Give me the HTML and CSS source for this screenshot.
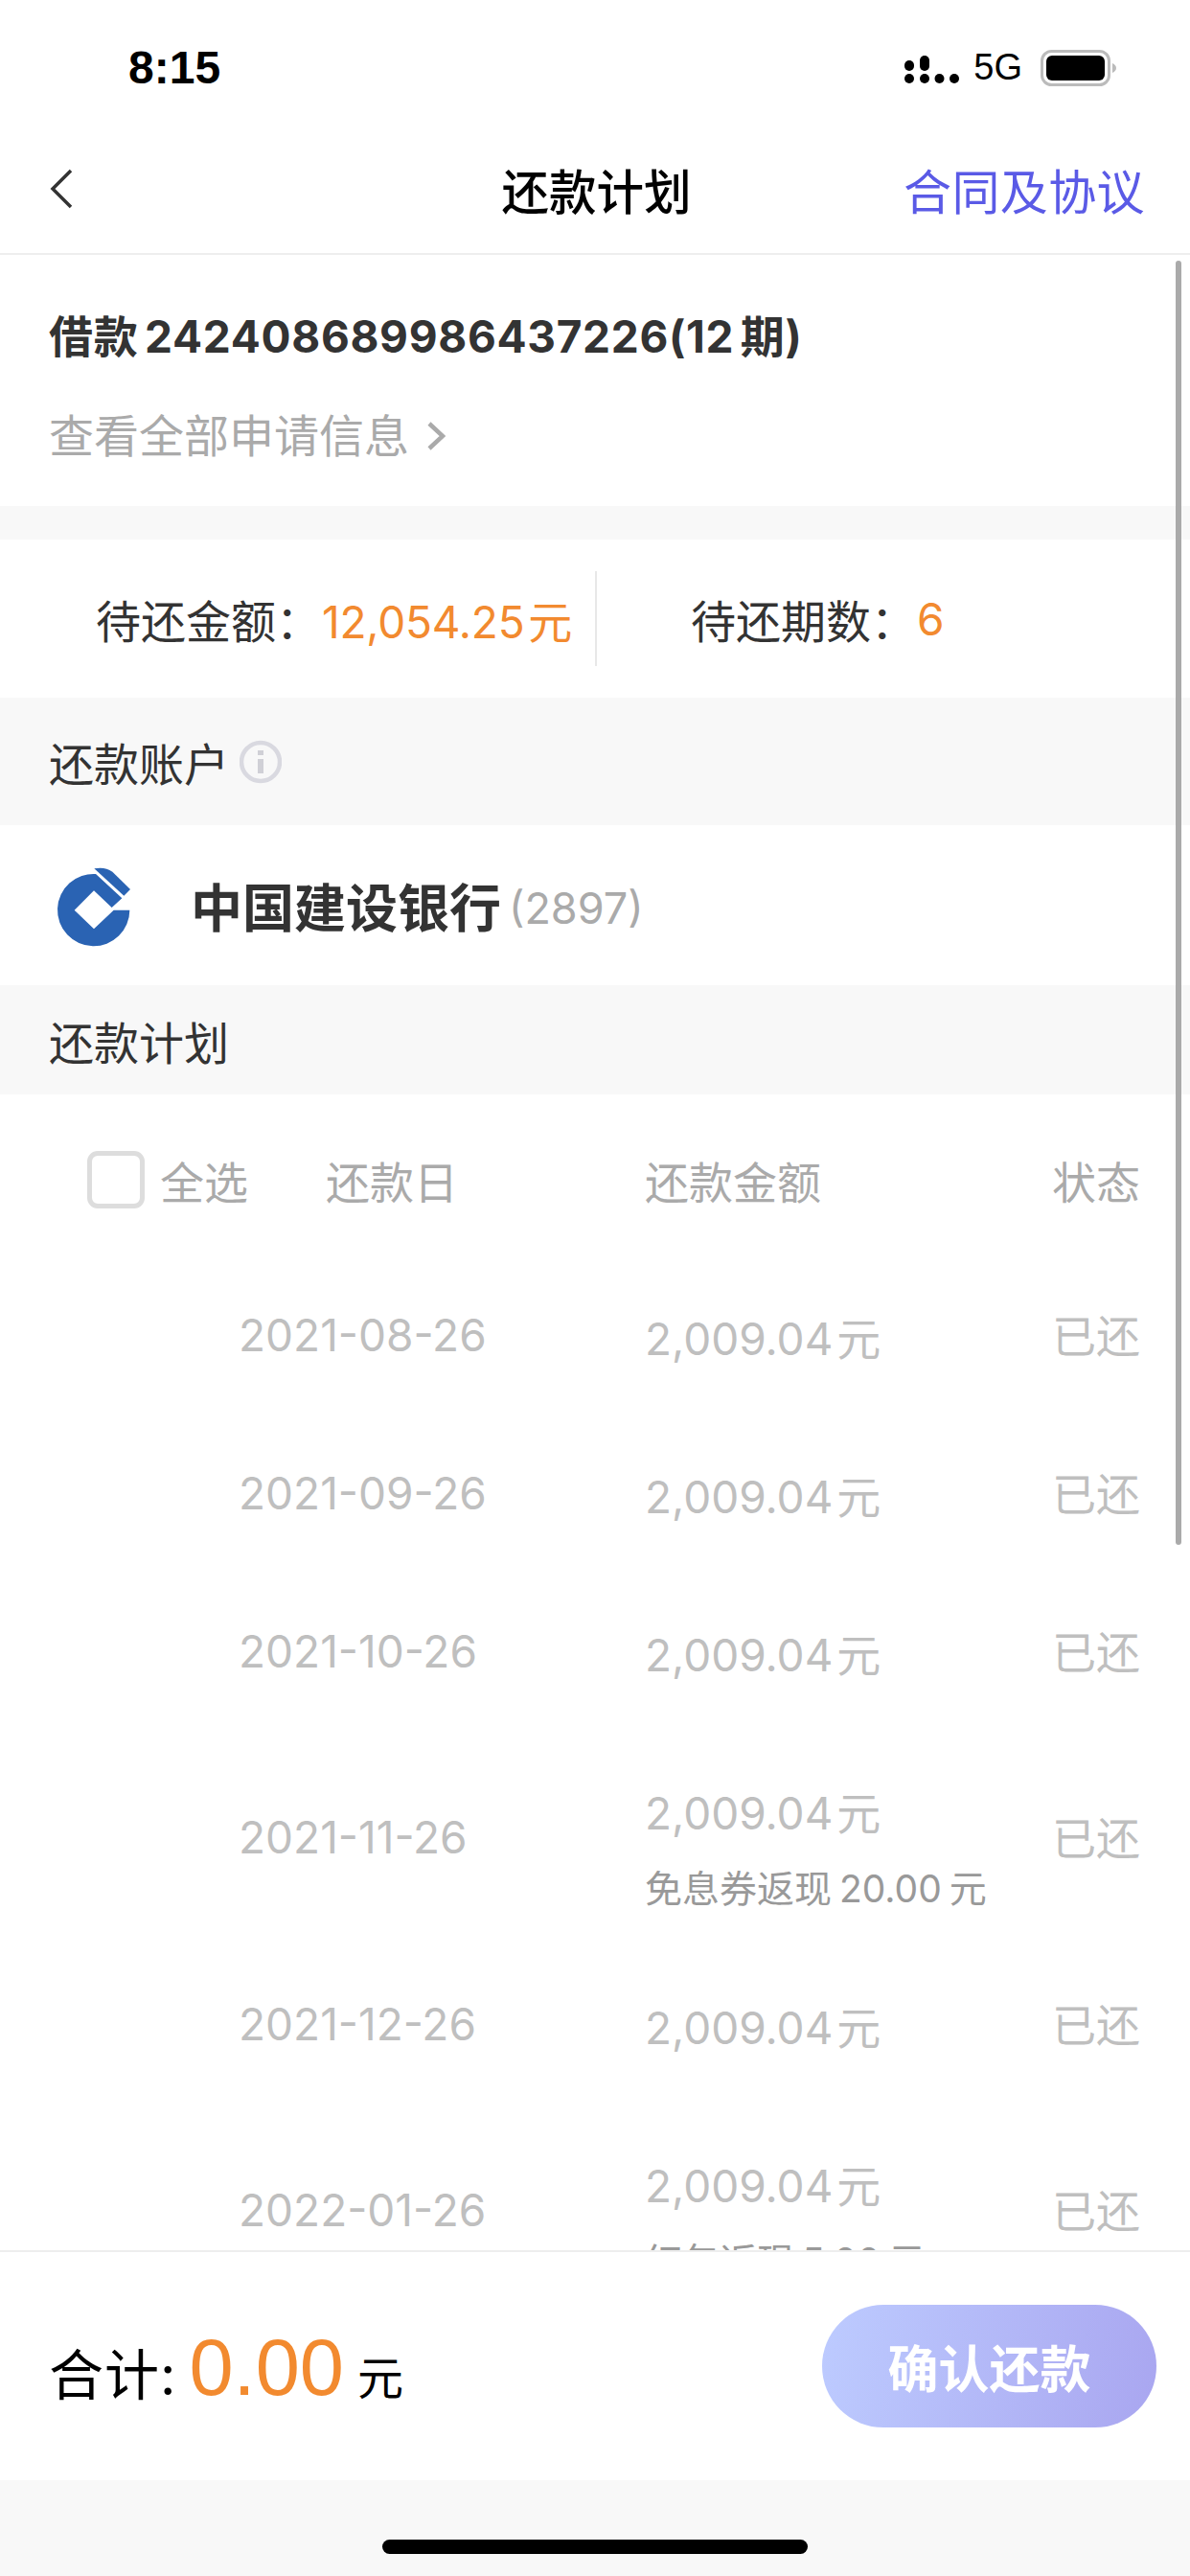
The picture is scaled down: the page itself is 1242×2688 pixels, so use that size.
FILE: index.html
```html
<!DOCTYPE html>
<html lang="zh-CN">
<head>
    <meta charset="UTF-8">
    <meta name="viewport" content="width=device-width, initial-scale=1.0">
    <title>还款计划</title>
    <link rel="stylesheet" href="styles.css">
</head>
<body>
    <div id="phone">
        <!-- Status Bar -->
        <div class="status-bar">
            <span class="time">8:15</span>
            <div class="status-icons">
                <svg class="signal" width="58" height="30" viewBox="0 0 58 30">
                    <rect x="0" y="5" width="10" height="11" rx="5" fill="#000"/>
                    <rect x="16" y="0" width="10" height="16" rx="5" fill="#000"/>
                    <circle cx="5" cy="24" r="5" fill="#000"/>
                    <circle cx="21" cy="24" r="5" fill="#000"/>
                    <circle cx="36.5" cy="24" r="5" fill="#000"/>
                    <circle cx="52" cy="24" r="5" fill="#000"/>
                </svg>
                <span class="network">5G</span>
                <svg class="battery" width="80" height="38" viewBox="0 0 80 38">
                    <rect x="1.5" y="1.5" width="70" height="35" rx="10" fill="none" stroke="#bbb" stroke-width="3"/>
                    <rect x="6" y="6" width="61" height="26" rx="6" fill="#000"/>
                    <path d="M75 14 Q79 16 79 19 Q79 22 75 24 Z" fill="#bbb"/>
                </svg>
            </div>
        </div>

        <!-- Nav Bar -->
        <div class="nav-bar">
            <svg class="back" width="24" height="42" viewBox="0 0 24 42">
                <path d="M22 2 L3 21 L22 40" fill="none" stroke="#333" stroke-width="3.5"/>
            </svg>
            <h1 class="nav-title">还款计划</h1>
            <a class="nav-link">合同及协议</a>
        </div>

        <div class="scroll-area">
            <!-- Loan Info -->
            <div class="loan-info">
                <div class="loan-title">借款 242408689986437226(12 期)</div>
                <div class="loan-more">
                    查看全部申请信息
                    <svg width="20" height="30" viewBox="0 0 20 30">
                        <path d="M3 2 L17 15 L3 28" fill="none" stroke="#aaa" stroke-width="4.5"/>
                    </svg>
                </div>
            </div>
            <div class="gap"></div>

            <!-- Summary -->
            <div class="summary">
                <div class="summary-item summary-left">
                    <span class="summary-label">待还金额：</span><span class="orange">12,054.25 元</span>
                </div>
                <div class="summary-item summary-right">
                    <span class="summary-label">待还期数：</span><span class="orange">6</span>
                </div>
            </div>

            <!-- Account -->
            <div class="section-head section-account">
                还款账户
                <svg width="44" height="46" viewBox="0 0 44 46">
                    <circle cx="22" cy="23" r="20" fill="none" stroke="#d9d9e0" stroke-width="4.5"/>
                    <rect x="19" y="20" width="6" height="15" fill="#d0d0d6"/>
                    <rect x="19" y="11" width="6" height="5" fill="#d0d0d6"/>
                </svg>
            </div>
            <div class="bank">
                <svg class="bank-logo" width="100" height="100" viewBox="60 50 300 300">
                    <path d="M316 205 A113 113 0 1 1 210 92 L292 168 L260 197 L204 144 L143 205 L204 264 L266 205 Z" fill="#2a63b3"/>
                    <path d="M205 75 Q238 68 262 85 L318 140 L298 160 Z" fill="#2a63b3"/>
                </svg>
                <span class="bank-name">中国建设银行</span>
                <span class="bank-card">(2897)</span>
            </div>

            <!-- Plan -->
            <div class="section-head section-plan">还款计划</div>
            <div class="plan-head">
                <div class="select-all"><span class="checkbox"></span>全选</div>
                <div>还款日</div>
                <div>还款金额</div>
                <div>状态</div>
            </div>

            <div class="plan-row">
                <div class="date">2021-08-26</div>
                <div class="amount"><div>2,009.04 元</div></div>
                <div class="state">已还</div>
            </div>
            <div class="plan-row">
                <div class="date">2021-09-26</div>
                <div class="amount"><div>2,009.04 元</div></div>
                <div class="state">已还</div>
            </div>
            <div class="plan-row">
                <div class="date">2021-10-26</div>
                <div class="amount"><div>2,009.04 元</div></div>
                <div class="state">已还</div>
            </div>
            <div class="plan-row">
                <div class="date">2021-11-26</div>
                <div class="amount"><div>2,009.04 元</div><div class="amount-note">免息券返现 20.00 元</div></div>
                <div class="state">已还</div>
            </div>
            <div class="plan-row">
                <div class="date">2021-12-26</div>
                <div class="amount"><div>2,009.04 元</div></div>
                <div class="state">已还</div>
            </div>
            <div class="plan-row">
                <div class="date">2022-01-26</div>
                <div class="amount"><div>2,009.04 元</div><div class="amount-note">红包返现 5.00 元</div></div>
                <div class="state">已还</div>
            </div>

            <div class="scrollbar"></div>
        </div>

        <!-- Footer -->
        <div class="footer">
            <div class="total">
                <span class="total-label">合计:</span><span class="total-num">0.00</span><span class="total-unit">元</span>
            </div>
            <button class="confirm">确认还款</button>
        </div>
        <div class="home-area"><div class="home-bar"></div></div>
    </div>
</body>
</html>
```

FILE: styles.css
```css
body {
    margin: 0;
    background-color: #fff;
    font-family: "Inter", "Noto Sans CJK SC", sans-serif;
}
#phone {
    width: 1242px;
    height: 2688px;
    display: flex;
    flex-direction: column;
    overflow: hidden;
}
.status-bar {
    height: 130px;
    flex: none;
    display: flex;
    justify-content: space-between;
    align-items: center;
    padding: 11px 76px 0 134px;
    box-sizing: border-box;
}
.time {
    font-family: "Liberation Sans", sans-serif;
    font-size: 48px;
    font-weight: 700;
    color: #000;
    margin-top: -1px;
}
.status-icons {
    display: flex;
    align-items: center;
    gap: 14px;
}
.network {
    font-family: "Liberation Sans", sans-serif;
    font-size: 38px;
    color: #000;
}
.signal {
    margin-top: 4px;
}
.battery {
    margin-left: 5px;
}
.nav-bar {
    height: 136px;
    flex: none;
    display: grid;
    grid-template-columns: 1fr auto 1fr;
    align-items: center;
    padding: 0 47px 0 50px;
    border-bottom: 2px solid #eee;
    box-sizing: border-box;
}
.back {
    margin-left: 2px;
}
.nav-title {
    margin: 0;
    font-size: 49.5px;
    font-weight: 500;
    color: #000;
}
.nav-link {
    justify-self: end;
    font-size: 50px;
    letter-spacing: .4px;
    color: #5a5ae6;
}
.scroll-area {
    position: relative;
    flex: 1;
    min-height: 0;
    overflow: hidden;
}
.scrollbar {
    position: absolute;
    top: 6px;
    right: 9px;
    width: 6px;
    height: 1340px;
    border-radius: 3px;
    background-color: #aaa;
}
.loan-info {
    height: 262px;
    padding: 55px 51px 0;
    box-sizing: border-box;
}
.loan-title {
    font-size: 46px;
    line-height: 60px;
    font-weight: 700;
    letter-spacing: .7px;
    word-spacing: -5px;
    color: #333;
}
.loan-more {
    margin-top: 44px;
    display: flex;
    align-items: center;
    gap: 18px;
    font-size: 47px;
    line-height: 60px;
    color: #aaa;
}
.gap {
    height: 35px;
    background-color: #f8f8f8;
}
.summary {
    height: 165px;
    display: flex;
    align-items: center;
    font-size: 47px;
    color: #333;
}
.summary-item {
    height: 99px;
    display: flex;
    align-items: center;
    box-sizing: border-box;
}
.summary-left {
    width: 623px;
    padding-left: 100px;
    border-right: 2px solid #e8e8e8;
}
.summary-right {
    padding-left: 98px;
}
.summary-label {
    width: 236px;
    flex: none;
}
.orange {
    color: #f28a2f;
    font-size: 46px;
    word-spacing: -9px;
    letter-spacing: -.2px;
}
.section-head {
    display: flex;
    align-items: center;
    gap: 11px;
    padding-left: 51px;
    background-color: #f8f8f8;
    font-size: 47px;
    color: #333;
}
.section-account {
    height: 133px;
}
.section-plan {
    height: 114px;
}
.bank {
    height: 167px;
    display: flex;
    align-items: center;
    padding-left: 50px;
}
.bank-logo {
    flex: none;
    margin: 6px 49px 0 0;
}
.bank-name {
    font-size: 54px;
    font-weight: 700;
    color: #333;
}
.bank-card {
    margin: 6px 0 0 8px;
    font-size: 45px;
    color: #aaa;
}
.plan-head {
    height: 168px;
    padding-top: 10px;
    box-sizing: border-box;
    display: grid;
    grid-template-columns: 340px 333px 425px 1fr;
    align-items: center;
    font-size: 46px;
    color: #aaa;
}
.select-all {
    display: flex;
    align-items: center;
    gap: 16px;
    padding-left: 91px;
}
.checkbox {
    width: 60px;
    height: 60px;
    box-sizing: border-box;
    border: 5px solid #ddd;
    border-radius: 11px;
}
.plan-row {
    min-height: 165px;
    display: grid;
    grid-template-columns: 673px 425px 1fr;
    align-items: center;
    font-size: 46px;
    color: #bfbfbf;
}
.date {
    padding-left: 249px;
}
.state {
    margin-top: -4px;
}
.amount {
    align-self: start;
    padding-top: 62px;
    line-height: 50px;
    word-spacing: -9px;
}
.amount-note {
    margin: 29px 0 33px;
    font-size: 39px;
    word-spacing: -3px;
    color: #999;
}
.footer {
    height: 240px;
    flex: none;
    display: flex;
    justify-content: space-between;
    align-items: center;
    padding: 0 35px 0 51px;
    border-top: 2px solid #eee;
    box-sizing: border-box;
    background-color: #fff;
}
.total {
    display: flex;
    align-items: baseline;
    margin-top: 3px;
    font-size: 57px;
    color: #000;
}
.total-label {
    letter-spacing: 1px;
}
.total-num {
    margin: 0 14px 0 13px;
    font-family: "Liberation Sans", sans-serif;
    font-size: 83px;
    color: #f28a2f;
}
.total-unit {
    font-size: 48px;
}
.confirm {
    width: 349px;
    height: 128px;
    border: 0;
    border-radius: 64px;
    background: linear-gradient(100deg, #bdcbff, #a9a6f0);
    font-family: inherit;
    font-size: 53px;
    font-weight: 700;
    color: #fff;
}
.home-area {
    height: 100px;
    flex: none;
    padding-top: 62px;
    box-sizing: border-box;
    background-color: #f8f8f8;
}
.home-bar {
    width: 444px;
    height: 15px;
    margin: 0 auto;
    border-radius: 8px;
    background-color: #000;
}
```
